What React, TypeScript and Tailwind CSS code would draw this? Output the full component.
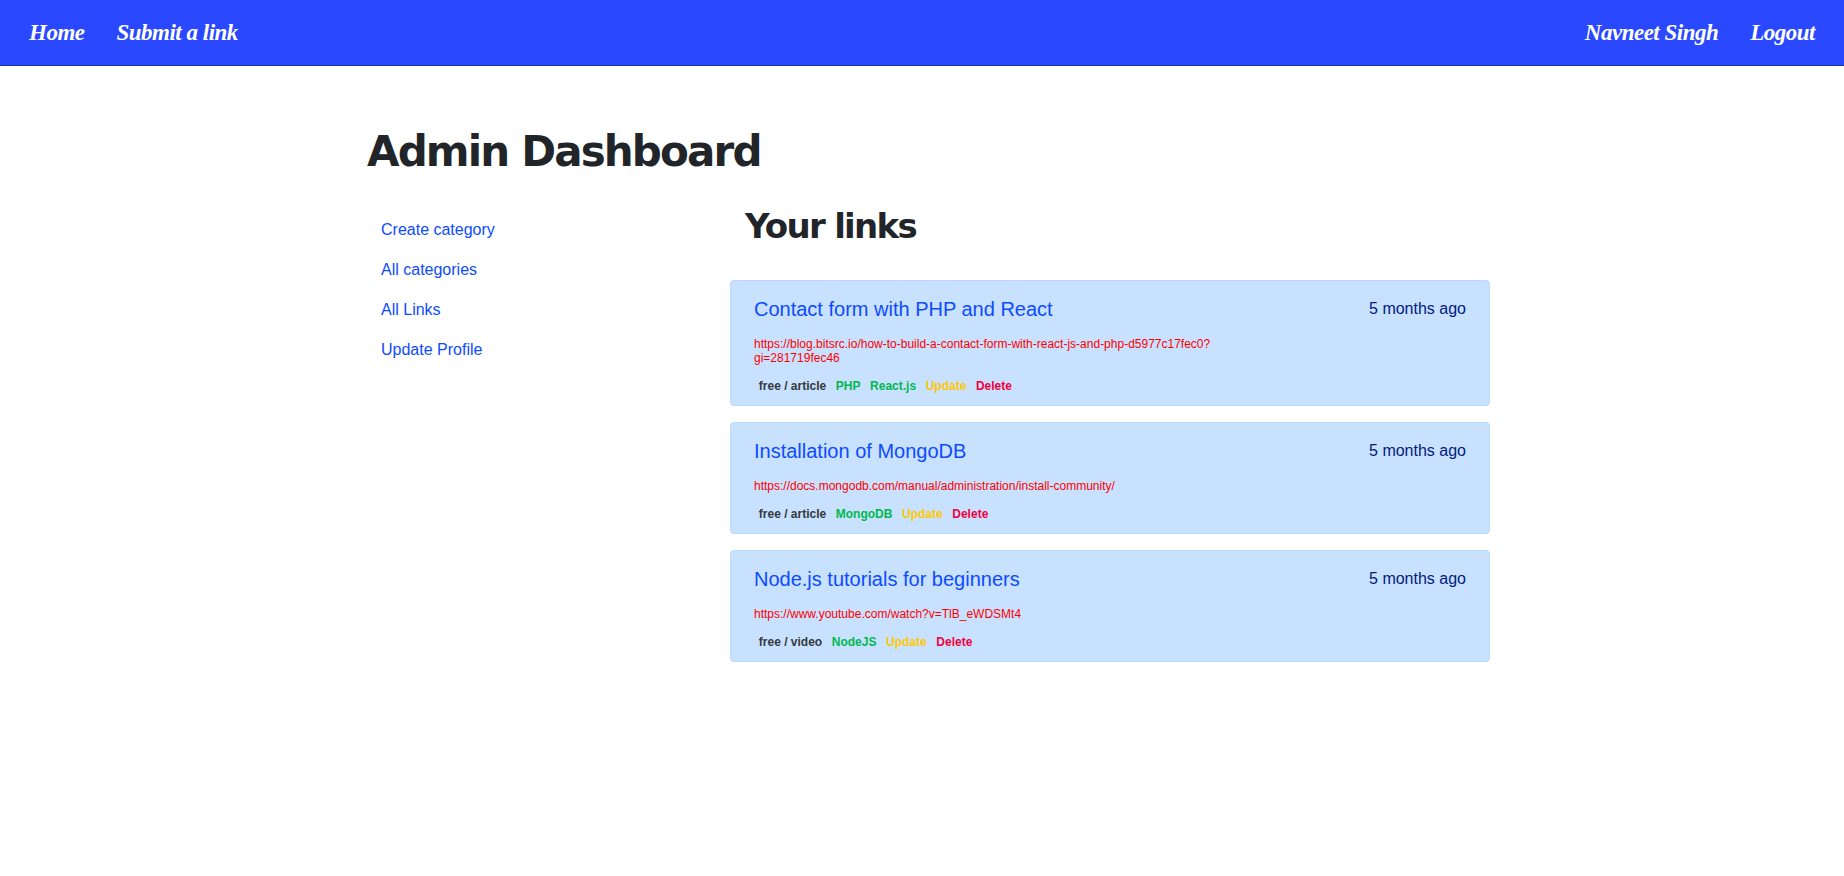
const links = [
  {
    title: "Contact form with PHP and React",
    url: "https://blog.bitsrc.io/how-to-build-a-contact-form-with-react-js-and-php-d5977c17fec0?gi=281719fec46",
    type: "free / article",
    tags: ["PHP", "React.js"],
  },
  {
    title: "Installation of MongoDB",
    url: "https://docs.mongodb.com/manual/administration/install-community/",
    type: "free / article",
    tags: ["MongoDB"],
  },
  {
    title: "Node.js tutorials for beginners",
    url: "https://www.youtube.com/watch?v=TlB_eWDSMt4",
    type: "free / video",
    tags: ["NodeJS"],
  },
];

const sideLinks = ["Create category", "All categories", "All Links", "Update Profile"];

function NavLink({ children }: { children: string }) {
  return (
    <a className="px-4 text-[23px] leading-[38px] font-bold italic text-white font-['Liberation_Serif',serif] tracking-[-0.5px]">
      {children}
    </a>
  );
}

function Badge({ children, color }: { children: string; color: string }) {
  return <span className={`px-[4.8px] text-[12px] leading-[12px] font-bold ${color}`}>{children}</span>;
}

export default function App() {
  return (
    <div className="min-h-[876px] bg-white font-['Liberation_Sans',sans-serif] text-[16px]">
      <nav className="flex h-[66px] items-center justify-between border-b border-[#1a2f9f] bg-[#2948ff] px-[13px]">
        <div className="flex">
          <NavLink>Home</NavLink>
          <NavLink>Submit a link</NavLink>
        </div>
        <div className="flex">
          <NavLink>Navneet Singh</NavLink>
          <NavLink>Logout</NavLink>
        </div>
      </nav>

      <main className="mx-auto w-[1140px] -translate-x-[2px]">
        <h1 className="mt-[62px] mb-[34px] pl-[17px] text-[42px] leading-[48px] font-bold tracking-[-1.85px] text-[#212529] font-['DejaVu_Sans',sans-serif]">
          Admin Dashboard
        </h1>
        <div className="flex">
          <aside className="w-[380px] shrink-0">
            {sideLinks.map((l) => (
              <a key={l} className="block px-[31px] py-2 text-[16px] leading-6 text-[#0d4bff]">
                {l}
              </a>
            ))}
          </aside>
          <section className="w-[760px]">
            <h2 className="-mt-[3px] mb-[35px] pl-[15px] text-[34px] leading-[38px] font-bold tracking-[-1.7px] text-[#212529] font-['DejaVu_Sans',sans-serif]">
              Your links
            </h2>
            {links.map((link) => (
              <div
                key={link.title}
                className="mb-4 rounded border border-[#b8daff] bg-[#c8e1ff] px-[23px] pt-4 pb-[13px] text-[#00207f]"
              >
                <div className="flex items-start justify-between">
                  <h5 className="text-[20px] leading-6 text-[#0d4bff]">{link.title}</h5>
                  <span className="text-[16px] leading-6">5 months ago</span>
                </div>
                <p className="mt-[16px] w-[500px] text-[12px] leading-[14px] text-[#ff0000]">{link.url}</p>
                <div className="mt-[15px] flex items-center leading-[18px]">
                  <Badge color="text-[#343a40]">{link.type}</Badge>
                  {link.tags.map((t) => (
                    <Badge key={t} color="text-[#00b84f]">
                      {t}
                    </Badge>
                  ))}
                  <Badge color="text-[#ffc800]">Update</Badge>
                  <Badge color="text-[#f5003c]">Delete</Badge>
                </div>
              </div>
            ))}
          </section>
        </div>
      </main>
    </div>
  );
}
